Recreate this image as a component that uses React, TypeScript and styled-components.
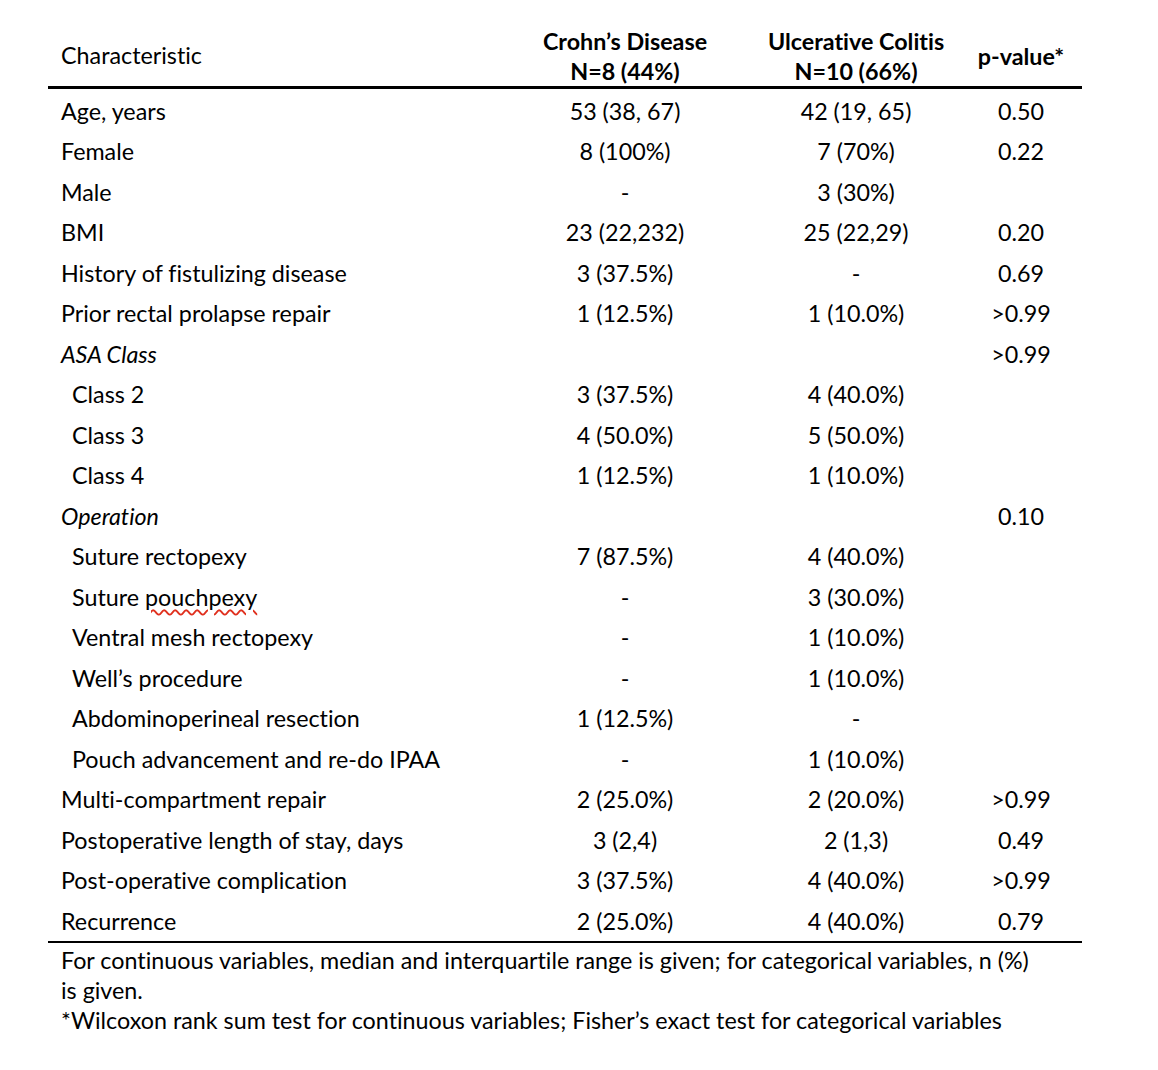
import React from "react";
import styled, { createGlobalStyle } from "styled-components";

const Global = createGlobalStyle`
  html, body { margin: 0; padding: 0; background: #ffffff; }
  body {
    font-family: Lato, "Open Sans", sans-serif;
    color: #000;
    font-variant-ligatures: none;
  }
`;

const Page = styled.div`
  width: 1158px;
  height: 1070px;
  padding: 26px 0 0 48px;
  box-sizing: border-box;
`;

const Table = styled.div`
  width: 1034px;
  font-size: 23.3px;
`;

const cols = "462px 230px 232px 98px 12px";

const HeadRow = styled.div`
  display: grid;
  grid-template-columns: ${cols};
  align-items: center;
  height: 60px;
  border-bottom: 3px solid #000;
  font-weight: 700;
`;

const HeadLabel = styled.div`
  padding-left: 13px;
  font-weight: 400;
  line-height: 30px;
  padding-bottom: 2px;
`;

const HeadCell = styled.div`
  text-align: center;
  line-height: 30px;
`;

const Body = styled.div`
  padding-top: 1.5px;
  border-bottom: 2px solid #000;
`;

const Row = styled.div`
  display: grid;
  grid-template-columns: ${cols};
  align-items: center;
  height: 40.5px;
`;

const Label = styled.div<{ $indent?: boolean; $italic?: boolean }>`
  padding-left: ${(p) => (p.$indent ? "24px" : "13px")};
  font-style: ${(p) => (p.$italic ? "italic" : "normal")};
  white-space: nowrap;
`;

const Cell = styled.div`
  text-align: center;
  white-space: nowrap;
`;

const Squiggle = styled.span`
  text-decoration: underline wavy #e0301e;
  text-decoration-thickness: 1.5px;
  text-underline-offset: 3px;
`;

const Note = styled.div`
  padding: 2px 0 0 13px;
  line-height: 30px;
  white-space: nowrap;
`;

type R = { label: React.ReactNode; cd?: string; uc?: string; p?: string; indent?: boolean; italic?: boolean };

const rows: R[] = [
  { label: "Age, years", cd: "53 (38, 67)", uc: "42 (19, 65)", p: "0.50" },
  { label: "Female", cd: "8 (100%)", uc: "7 (70%)", p: "0.22" },
  { label: "Male", cd: "-", uc: "3 (30%)" },
  { label: "BMI", cd: "23 (22,232)", uc: "25 (22,29)", p: "0.20" },
  { label: "History of fistulizing disease", cd: "3 (37.5%)", uc: "-", p: "0.69" },
  { label: "Prior rectal prolapse repair", cd: "1 (12.5%)", uc: "1 (10.0%)", p: ">0.99" },
  { label: "ASA Class", italic: true, p: ">0.99" },
  { label: "Class 2", indent: true, cd: "3 (37.5%)", uc: "4 (40.0%)" },
  { label: "Class 3", indent: true, cd: "4 (50.0%)", uc: "5 (50.0%)" },
  { label: "Class 4", indent: true, cd: "1 (12.5%)", uc: "1 (10.0%)" },
  { label: "Operation", italic: true, p: "0.10" },
  { label: "Suture rectopexy", indent: true, cd: "7 (87.5%)", uc: "4 (40.0%)" },
  {
    label: (
      <>
        Suture <Squiggle>pouchpexy</Squiggle>
      </>
    ),
    indent: true,
    cd: "-",
    uc: "3 (30.0%)",
  },
  { label: "Ventral mesh rectopexy", indent: true, cd: "-", uc: "1 (10.0%)" },
  { label: "Well’s procedure", indent: true, cd: "-", uc: "1 (10.0%)" },
  { label: "Abdominoperineal resection", indent: true, cd: "1 (12.5%)", uc: "-" },
  { label: "Pouch advancement and re-do IPAA", indent: true, cd: "-", uc: "1 (10.0%)" },
  { label: "Multi-compartment repair", cd: "2 (25.0%)", uc: "2 (20.0%)", p: ">0.99" },
  { label: "Postoperative length of stay, days", cd: "3 (2,4)", uc: "2 (1,3)", p: "0.49" },
  { label: "Post-operative complication", cd: "3 (37.5%)", uc: "4 (40.0%)", p: ">0.99" },
  { label: "Recurrence", cd: "2 (25.0%)", uc: "4 (40.0%)", p: "0.79" },
];

export default function App() {
  return (
    <>
      <Global />
      <Page>
        <Table>
          <HeadRow>
            <HeadLabel>Characteristic</HeadLabel>
            <HeadCell>
              Crohn’s Disease
              <br />
              N=8 (44%)
            </HeadCell>
            <HeadCell>
              Ulcerative Colitis
              <br />
              N=10 (66%)
            </HeadCell>
            <HeadCell>p-value*</HeadCell>
            <div />
          </HeadRow>
          <Body>
            {rows.map((r, i) => (
              <Row key={i}>
                <Label $indent={r.indent} $italic={r.italic}>
                  {r.label}
                </Label>
                <Cell>{r.cd ?? ""}</Cell>
                <Cell>{r.uc ?? ""}</Cell>
                <Cell>{r.p ?? ""}</Cell>
                <div />
              </Row>
            ))}
          </Body>
          <Note>
            For continuous variables, median and interquartile range is given; for categorical variables, n (%)
            <br />
            is given.
            <br />
            *Wilcoxon rank sum test for continuous variables; Fisher’s exact test for categorical variables
          </Note>
        </Table>
      </Page>
    </>
  );
}
